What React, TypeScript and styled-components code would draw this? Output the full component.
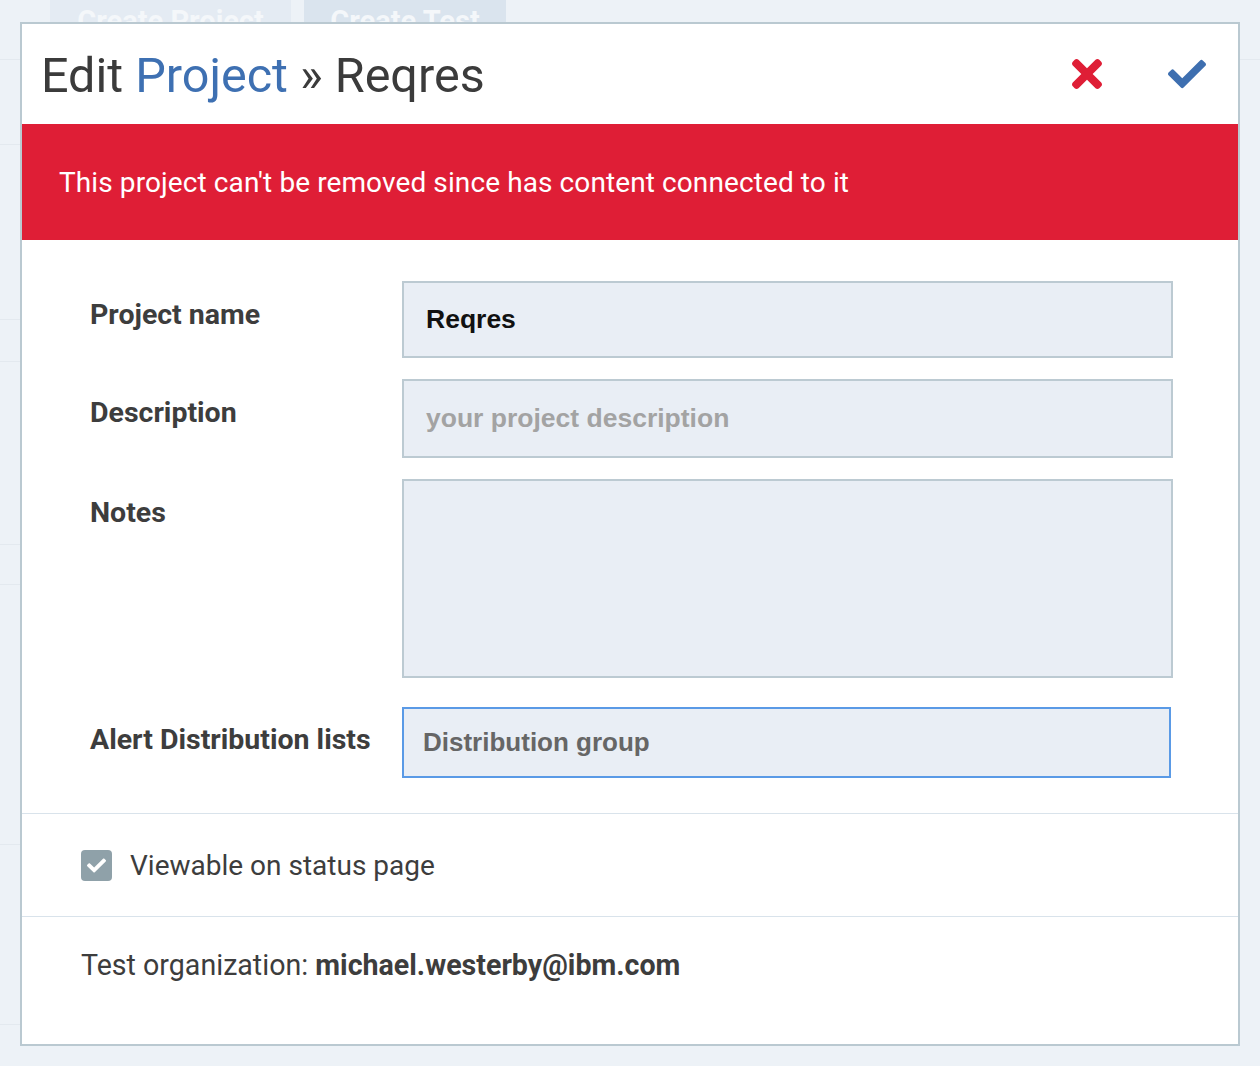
import React from "react";
import styled, { createGlobalStyle } from "styled-components";

const GlobalStyle = createGlobalStyle`
  html, body {
    margin: 0;
    padding: 0;
    background: #edf2f7;
    font-family: Roboto, "Noto Sans", sans-serif;
  }
  * { box-sizing: border-box; }
`;

const Page = styled.div`
  position: relative;
  width: 1260px;
  height: 1066px;
  overflow: hidden;
  background: #edf2f7;
`;

const TopBar = styled.div`
  display: flex;
  gap: 13px;
  padding-left: 50px;
  height: 60px;
  border-bottom: 1px solid #e3e9ef;
`;

const BgButton = styled.div<{ $tone: string; $w: number }>`
  width: ${(p) => p.$w}px;
  height: 60px;
  background: ${(p) => p.$tone};
  color: #f4f7fa;
  font-weight: 700;
  font-size: 29px;
  display: flex;
  justify-content: center;
  padding-top: 4px;
`;

const SideList = styled.div`
  display: flex;
  flex-direction: column;
  width: 20px;
`;

const SideItem = styled.div<{ $h: number }>`
  height: ${(p) => p.$h}px;
  border-bottom: 1px solid #e3e9ef;
`;

const Modal = styled.div`
  position: absolute;
  left: 20px;
  top: 22px;
  width: 1220px;
  height: 1024px;
  border: 2px solid #bac9d1;
  background: #ffffff;
  display: flex;
  flex-direction: column;
`;

const Header = styled.div`
  height: 100px;
  display: flex;
  align-items: center;
  justify-content: space-between;
  padding: 0 32px 0 19px;
`;

const Title = styled.h1`
  margin: 0;
  padding-top: 3px;
  font-family: Roboto, sans-serif;
  font-weight: 400;
  font-size: 48.5px;
  color: #3b3b3b;
`;

const TitleLink = styled.span`
  color: #3e70b2;
`;

const Actions = styled.div`
  display: flex;
  align-items: center;
  gap: 66px;
`;

const IconButton = styled.button`
  border: 0;
  background: none;
  padding: 0;
  display: flex;
  cursor: pointer;
`;

const Banner = styled.div`
  height: 116px;
  background: #df1e36;
  color: #ffffff;
  display: flex;
  align-items: center;
  padding-left: 37px;
  font-family: Roboto, sans-serif;
  font-size: 28px;
  letter-spacing: 0.1px;
`;

const Form = styled.div`
  display: grid;
  grid-template-columns: 312px 771px;
  row-gap: 21px;
  padding: 41px 0 35px 68px;
`;

const Label = styled.label<{ $top?: number }>`
  font-family: Roboto, sans-serif;
  font-weight: 700;
  font-size: 28.5px;
  color: #3d3d3d;
  padding-top: ${(p) => p.$top ?? 17}px;
`;

const Field = styled.div<{ $h: number; $focus?: boolean; $muted?: boolean }>`
  height: ${(p) => p.$h}px;
  background: #e9eef5;
  border: 2px solid ${(p) => (p.$focus ? "#5a9ae6" : "#bccad2")};
  padding: 0 22px;
  display: flex;
  align-items: center;
  font-family: "Liberation Sans", Arial, sans-serif;
  font-weight: 700;
  font-size: 26.5px;
  color: ${(p) => (p.$muted ? "#a3a3a3" : "#111111")};
  ${(p) =>
    p.$focus
      ? "width: 769px; margin-top: 8px; color: #666666; padding-left: 19px; font-size: 26px;"
      : ""}
`;

const Section = styled.div<{ $h: number }>`
  height: ${(p) => p.$h}px;
  border-top: 1px solid #d9e3eb;
  display: flex;
  align-items: center;
  padding-left: 59px;
  font-family: Roboto, sans-serif;
  font-size: 28px;
  color: #3d3d3d;
`;

const CheckRow = styled.label`
  display: flex;
  align-items: center;
  gap: 18px;
`;

const CheckBox = styled.span`
  width: 31px;
  height: 31px;
  border-radius: 4px;
  background: #8fa1a9;
  display: flex;
  align-items: center;
  justify-content: center;
`;

const Footer = styled(Section)`
  align-items: flex-start;
  padding-top: 31px;
  font-size: 28.6px;
`;

const Strong = styled.b`
  font-weight: 700;
`;

const CHECK =
  "M173.898 439.404l-166.4-166.4c-9.997-9.997-9.997-26.206 0-36.204l36.203-36.204c9.997-9.998 26.207-9.998 36.204 0L192 312.69 432.095 72.596c9.997-9.997 26.207-9.997 36.204 0l36.203 36.204c9.997 9.997 9.997 26.206 0 36.204l-294.4 294.401c-9.998 9.997-26.207 9.997-36.204-.001z";

const TIMES =
  "M242.72 256l100.07-100.07c12.28-12.280 12.28-32.19 0-44.48l-22.24-22.24c-12.28-12.28-32.19-12.28-44.48 0L176 189.28 75.93 89.21c-12.28-12.28-32.19-12.28-44.48 0L9.21 111.45c-12.28 12.28-12.28 32.19 0 44.48L109.28 256 9.21 356.07c-12.28 12.28-12.28 32.19 0 44.48l22.24 22.24c12.28 12.28 32.2 12.28 44.48 0L176 322.72l100.07 100.07c12.28 12.28 32.2 12.28 44.48 0l22.24-22.24c12.28-12.28 12.28-32.19 0-44.48L242.72 256z";

export default function App() {
  return (
    <>
      <GlobalStyle />
      <Page>
        <TopBar>
          <BgButton $tone="#e4ebf3" $w={241}>Create Project</BgButton>
          <BgButton $tone="#dae4ee" $w={202}>Create Test</BgButton>
        </TopBar>
        <SideList>
          <SideItem $h={85} />
          <SideItem $h={175} />
          <SideItem $h={42} />
          <SideItem $h={183} />
          <SideItem $h={40} />
          <SideItem $h={260} />
          <SideItem $h={180} />
        </SideList>
        <Modal>
          <Header>
            <Title>
              Edit <TitleLink>Project</TitleLink> » Reqres
            </Title>
            <Actions>
              <IconButton aria-label="Cancel">
                <svg width="30" height="30" viewBox="0 80 352 352">
                  <path fill="#df1e36" d={TIMES} />
                </svg>
              </IconButton>
              <IconButton aria-label="Save">
                <svg width="38" height="30" viewBox="0 64 512 384">
                  <path fill="#3e6fb0" d={CHECK} />
                </svg>
              </IconButton>
            </Actions>
          </Header>
          <Banner>This project can't be removed since has content connected to it</Banner>
          <Form>
            <Label>Project name</Label>
            <Field $h={77}>Reqres</Field>
            <Label>Description</Label>
            <Field $h={79} $muted>your project description</Field>
            <Label>Notes</Label>
            <Field $h={199} />
            <Label $top={24}>Alert Distribution lists</Label>
            <Field $h={71} $focus>Distribution group</Field>
          </Form>
          <Section $h={103}>
            <CheckRow>
              <CheckBox>
                <svg width="19" height="15" viewBox="0 64 512 384">
                  <path fill="#ffffff" d={CHECK} />
                </svg>
              </CheckBox>
              Viewable on status page
            </CheckRow>
          </Section>
          <Footer $h={126}>
            <span>
              Test organization: <Strong>michael.westerby@ibm.com</Strong>
            </span>
          </Footer>
        </Modal>
      </Page>
    </>
  );
}
